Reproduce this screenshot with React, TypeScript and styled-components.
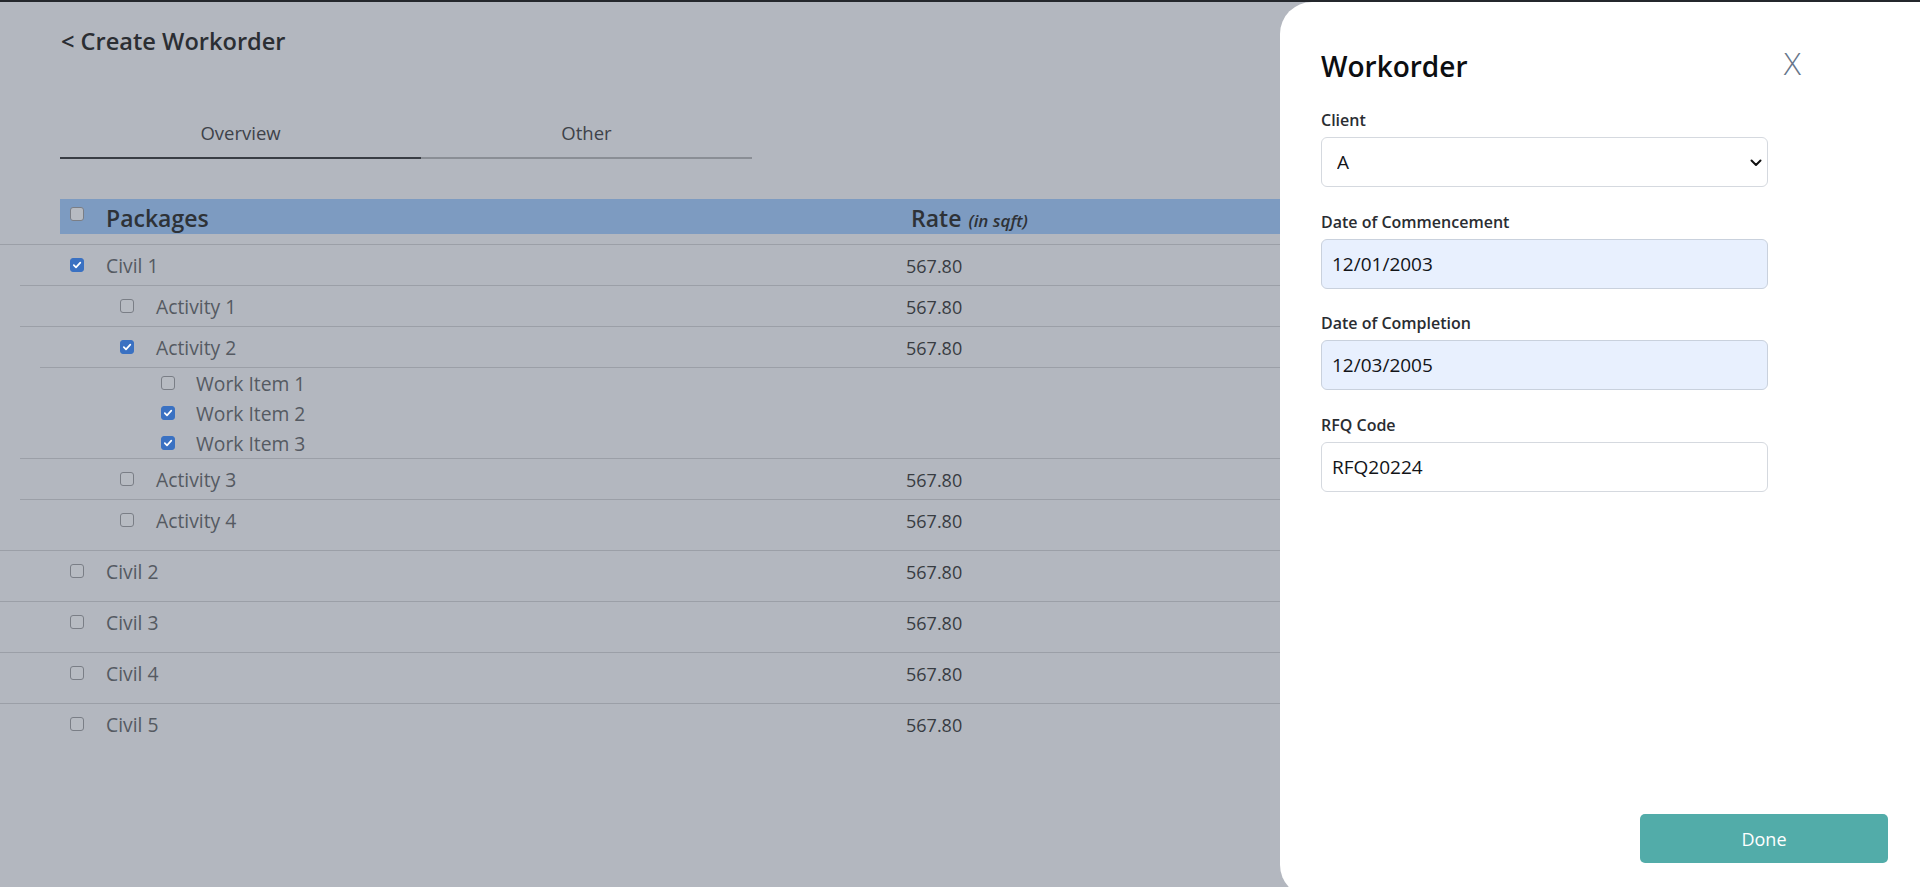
import React from "react";
import styled, { createGlobalStyle } from "styled-components";

const GlobalStyle = createGlobalStyle`
  html, body { margin: 0; padding: 0; }
  body {
    background: #b3b7bf;
    font-family: "Open Sans", "Noto Sans", "Liberation Sans", sans-serif;
    overflow: hidden;
  }
  * { box-sizing: border-box; }
`;

const RATE_X = 906;

const Screen = styled.div`
  position: relative;
  width: 100%;
  height: 887px;
  overflow: hidden;
  background: #b3b7bf;
`;

const TopBar = styled.div`
  height: 2px;
  background: #24272c;
`;

const Main = styled.main`
  display: flex;
  flex-direction: column;
`;

const PageTitle = styled.h1`
  margin: 24px 0 0 61px;
  font-size: 23.6px;
  line-height: 31px;
  font-weight: 600;
  color: #2b2e33;
`;

const Tabs = styled.nav`
  display: flex;
  margin: 64px 0 0 60px;
`;

const Tab = styled.div<{ $width: number; $active?: boolean }>`
  width: ${(p) => p.$width}px;
  text-align: center;
  font-size: 18.5px;
  line-height: 24px;
  color: #3e4249;
  padding-bottom: 12px;
  border-bottom: 2px solid ${(p) => (p.$active ? "#393d44" : "#8a8e95")};
`;

const HeadBar = styled.div`
  margin: 40px 60px 0;
  height: 35px;
  background: #7d9bc1;
  display: grid;
  grid-template-columns: ${RATE_X + 5 - 60}px 1fr;
  align-items: start;
`;

const HeadCell = styled.div`
  display: flex;
  align-items: flex-start;
  gap: 22px;
  padding-left: 10px;
`;

const HeadText = styled.span`
  font-size: 23px;
  line-height: 30px;
  padding-top: 4px;
  font-weight: 600;
  color: #2e3237;
`;

const Unit = styled.em`
  font-size: 17px;
  font-weight: 600;
  margin-left: 7px;
  color: #2e3237;
`;

const List = styled.div`
  margin-top: 10px;
`;

const PackageBlock = styled.section`
  border-top: 1px solid #9b9fa7;
  padding-bottom: 10px;
`;

const ActivityBlock = styled.div`
  margin-left: 20px;
  border-top: 1px solid #9b9fa7;
`;

const WorkGroup = styled.div`
  margin-left: 20px;
  border-top: 1px solid #9b9fa7;
`;

const Row = styled.div<{ $offset: number; $height: number }>`
  display: grid;
  grid-template-columns: ${(p) => RATE_X - p.$offset}px 1fr;
  align-items: center;
  height: ${(p) => p.$height}px;
  padding-top: 1px;
`;

const NameCell = styled.div<{ $pad: number; $gap: number }>`
  display: flex;
  align-items: center;
  padding-left: ${(p) => p.$pad}px;
  gap: ${(p) => p.$gap}px;
  font-size: 19.3px;
  line-height: 24px;
  color: #555a62;
`;

const RateCell = styled.div`
  font-size: 18px;
  line-height: 24px;
  color: #383c42;
`;

const Box = styled.span<{ $checked?: boolean; $top?: number }>`
  flex: none;
  width: 14px;
  height: 14px;
  margin-top: ${(p) => p.$top ?? 0}px;
  border-radius: 3px;
  border: 1px solid ${(p) => (p.$checked ? "#3a71c2" : "#7a7e86")};
  background: ${(p) => (p.$checked ? "#3a71c2" : "#b7bbc2")};
  display: inline-flex;
  align-items: center;
  justify-content: center;
`;

const Checkbox: React.FC<{ checked?: boolean; top?: number }> = ({ checked, top }) => (
  <Box $checked={checked} $top={top}>
    {checked && (
      <svg width="10" height="10" viewBox="0 0 10 10">
        <path d="M1.8 5.2 L4 7.4 L8.3 2.6" fill="none" stroke="#fff" strokeWidth="1.7" strokeLinecap="round" strokeLinejoin="round" />
      </svg>
    )}
  </Box>
);

/* Drawer */

const Drawer = styled.aside`
  position: absolute;
  top: 2px;
  right: 0;
  width: 640px;
  height: 895px;
  background: #ffffff;
  border-radius: 32px 0 0 32px;
  display: flex;
  flex-direction: column;
  padding: 47px 32px 34px 41px;
`;

const DrawerHead = styled.div`
  width: 480px;
  display: flex;
  justify-content: space-between;
  align-items: flex-start;
`;

const DrawerTitle = styled.h2`
  margin: 0;
  font-size: 28px;
  line-height: 34px;
  font-weight: 600;
  color: #0c0e11;
`;

const Close = styled.button`
  margin-top: -3px;
  padding: 0;
  border: 0;
  background: none;
  font-family: "Open Sans", "Noto Sans", sans-serif;
  font-size: 32px;
  line-height: 34px;
  font-weight: 300;
  color: #67768a;
`;

const Form = styled.form`
  flex: 1;
  margin-top: 25px;
  width: 447px;
`;

const Field = styled.div`
  margin-bottom: 22.5px;
`;

const Label = styled.label`
  display: block;
  font-size: 16px;
  line-height: 24px;
  font-weight: 600;
  color: #2a2d32;
  margin-bottom: 5px;
`;

const inputBase = `
  display: block;
  width: 100%;
  height: 50px;
  border-radius: 6px;
  font-family: "Open Sans", "Noto Sans", sans-serif;
  font-size: 19px;
  color: #121418;
  outline: none;
`;

const TextInput = styled.input<{ $filled?: boolean }>`
  ${inputBase}
  padding: 0 10px;
  background: ${(p) => (p.$filled ? "#e8f0fe" : "#ffffff")};
  border: 1px solid ${(p) => (p.$filled ? "#c9d1dd" : "#d5d9df")};
`;

const SelectWrap = styled.div`
  position: relative;
`;

const Select = styled.select`
  ${inputBase}
  appearance: none;
  -webkit-appearance: none;
  padding: 0 30px 0 15px;
  background: #ffffff;
  border: 1px solid #d5d9df;
`;

const Chevron = styled.svg`
  position: absolute;
  right: 6px;
  top: 22px;
  pointer-events: none;
`;

const Footer = styled.div`
  display: flex;
  justify-content: flex-end;
`;

const DoneButton = styled.button`
  width: 248px;
  height: 49px;
  border: 0;
  border-radius: 5px;
  background: #52aca9;
  color: #ffffff;
  font-family: "Open Sans", "Noto Sans", sans-serif;
  font-size: 18px;
`;

type Activity = { name: string; checked?: boolean; items?: { name: string; checked?: boolean }[] };
type Pkg = { name: string; checked?: boolean; rate: string; activities?: Activity[] };

const packages: Pkg[] = [
  {
    name: "Civil 1",
    checked: true,
    rate: "567.80",
    activities: [
      { name: "Activity 1" },
      {
        name: "Activity 2",
        checked: true,
        items: [
          { name: "Work Item 1" },
          { name: "Work Item 2", checked: true },
          { name: "Work Item 3", checked: true },
        ],
      },
      { name: "Activity 3" },
      { name: "Activity 4" },
    ],
  },
  { name: "Civil 2", rate: "567.80" },
  { name: "Civil 3", rate: "567.80" },
  { name: "Civil 4", rate: "567.80" },
  { name: "Civil 5", rate: "567.80" },
];

export default function App() {
  return (
    <Screen>
      <GlobalStyle />
      <TopBar />
      <Main>
        <PageTitle>&lt; Create Workorder</PageTitle>
        <Tabs>
          <Tab $width={361} $active>
            Overview
          </Tab>
          <Tab $width={331}>Other</Tab>
        </Tabs>
        <HeadBar>
          <HeadCell>
            <Checkbox top={8} />
            <HeadText>Packages</HeadText>
          </HeadCell>
          <HeadText>
            Rate<Unit>(in sqft)</Unit>
          </HeadText>
        </HeadBar>
        <List>
          {packages.map((p) => (
            <PackageBlock key={p.name}>
              <Row $offset={0} $height={40}>
                <NameCell $pad={70} $gap={22}>
                  <Checkbox checked={p.checked} top={-2} />
                  {p.name}
                </NameCell>
                <RateCell>{p.rate}</RateCell>
              </Row>
              {p.activities?.map((a) => (
                <ActivityBlock key={a.name}>
                  <Row $offset={20} $height={40}>
                    <NameCell $pad={100} $gap={22}>
                      <Checkbox checked={a.checked} top={-2} />
                      {a.name}
                    </NameCell>
                    <RateCell>{p.rate}</RateCell>
                  </Row>
                  {a.items && (
                    <WorkGroup>
                      {a.items.map((w) => (
                        <Row key={w.name} $offset={40} $height={30}>
                          <NameCell $pad={121} $gap={21}>
                            <Checkbox checked={w.checked} top={-1} />
                            {w.name}
                          </NameCell>
                        </Row>
                      ))}
                    </WorkGroup>
                  )}
                </ActivityBlock>
              ))}
            </PackageBlock>
          ))}
        </List>
      </Main>

      <Drawer>
        <DrawerHead>
          <DrawerTitle>Workorder</DrawerTitle>
          <Close type="button">X</Close>
        </DrawerHead>
        <Form>
          <Field>
            <Label>Client</Label>
            <SelectWrap>
              <Select defaultValue="A">
                <option value="A">A</option>
                <option value="B">B</option>
              </Select>
              <Chevron width="12" height="8" viewBox="0 0 12 8">
                <path d="M1.5 1.5 L6 6 L10.5 1.5" fill="none" stroke="#111" strokeWidth="2" strokeLinecap="round" strokeLinejoin="round" />
              </Chevron>
            </SelectWrap>
          </Field>
          <Field>
            <Label>Date of Commencement</Label>
            <TextInput $filled defaultValue="12/01/2003" />
          </Field>
          <Field>
            <Label>Date of Completion</Label>
            <TextInput $filled defaultValue="12/03/2005" />
          </Field>
          <Field>
            <Label>RFQ Code</Label>
            <TextInput defaultValue="RFQ20224" />
          </Field>
        </Form>
        <Footer>
          <DoneButton type="button">Done</DoneButton>
        </Footer>
      </Drawer>
    </Screen>
  );
}
